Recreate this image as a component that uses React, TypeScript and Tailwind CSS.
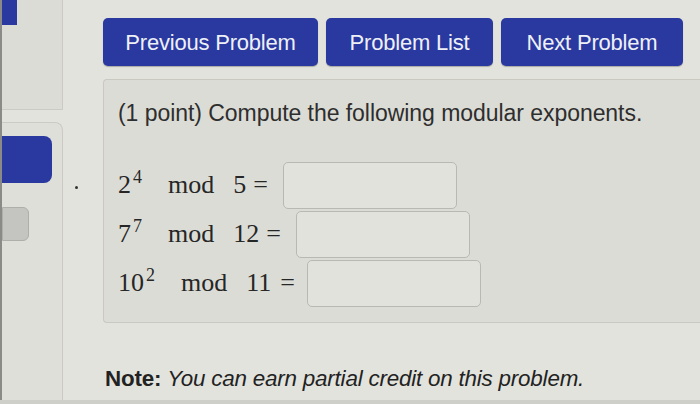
import React from 'react';

const rows = [
  { base: '2', exp: '4', m: '5', gapEq: 'ml-[7px]', gapIn: 'ml-[15px]' },
  { base: '7', exp: '7', m: '12', gapEq: 'ml-[7px]', gapIn: 'ml-[15px]' },
  { base: '10', exp: '2', m: '11', gapEq: 'ml-[9px]', gapIn: 'ml-[12px]' },
];

function NavButton({ label, width }: { label: string; width: string }) {
  return (
    <button
      className={`${width} h-[48px] rounded-[5px] bg-[#2a399f] text-[#eef0f7] text-[22px] tracking-[-0.2px] flex items-center justify-center shadow-[0_1px_1px_rgba(0,0,0,0.25)]`}
    >
      {label}
    </button>
  );
}

export default function App() {
  return (
    <div
      className="w-[700px] h-[404px] overflow-hidden bg-[#e3e3dd] flex relative"
      style={{ fontFamily: '"Liberation Sans", Arial, sans-serif' }}
    >
      {/* left sidebar */}
      <div className="w-[63px] h-full border-l-[2px] border-[#8a8a86] flex flex-col">
        <div className="h-[110px] bg-[#dcdcd6] border-r border-b border-[#cbcbc4]">
          <div className="w-[15px] h-[25px] bg-[#2a399f]" />
        </div>
        <div className="mt-[12px] flex-1 bg-[#dedfd9] border-r border-t border-[#cbcbc4] rounded-tr-[8px] pt-[13px]">
          <div className="w-[50px] h-[47px] bg-[#2a399f] rounded-r-[8px]" />
          <div className="mt-[24px] w-[27px] h-[34px] bg-[#c4c4c0] border border-[#aeaeaa] rounded-r-[6px]" />
        </div>
      </div>

      {/* main column */}
      <div className="flex-1 pl-[40px] pt-[18px] flex flex-col">
        <div className="flex gap-[8px]">
          <NavButton label="Previous Problem" width="w-[215px]" />
          <NavButton label="Problem List" width="w-[167px]" />
          <NavButton label="Next Problem" width="w-[182px]" />
        </div>

        <div className="mt-[13px] h-[244px] bg-[#dcdcd6] border border-r-0 border-[#c9c9c2] rounded-l-[4px] pl-[14px] pt-[19px]">
          <p className="text-[23px] text-[#2e2e2e] leading-[28px] tracking-[-0.05px]">
            (1 point) Compute the following modular exponents.
          </p>

          <div
            className="mt-[34px] flex flex-col gap-[1px] text-[#262626]"
            style={{ fontFamily: '"Liberation Serif", "Times New Roman", serif' }}
          >
            {rows.map((r, i) => (
              <div key={i} className="flex items-center h-[48px]">
                <span className="text-[26px] leading-none flex items-start">
                  {r.base}
                  <span className="text-[18px] leading-none ml-[2px] -mt-[4px]">{r.exp}</span>
                </span>
                <span className="ml-[26px] text-[26px] leading-none">mod</span>
                <span className="ml-[19px] text-[26px] leading-none">{r.m}</span>
                <span className={`${r.gapEq} text-[26px] leading-none`}>=</span>
                <div className={`${r.gapIn} w-[174px] h-[47px] bg-[#e2e2dd] border border-[#b9b9b3] rounded-[5px]`} />
              </div>
            ))}
          </div>
        </div>

        <p className="mt-[39px] ml-[2px] text-[22.4px] text-[#222] tracking-[-0.2px]">
          <span className="font-bold">Note:</span>{' '}
          <span className="italic">You can earn partial credit on this problem.</span>
        </p>
      </div>

      {/* speck */}
      <div className="absolute left-[75px] top-[186px] w-[3px] h-[3px] rounded-full bg-[#333]" />
      <div className="absolute left-0 bottom-0 w-full h-[4px] bg-[#cfcfca]" />
    </div>
  );
}
